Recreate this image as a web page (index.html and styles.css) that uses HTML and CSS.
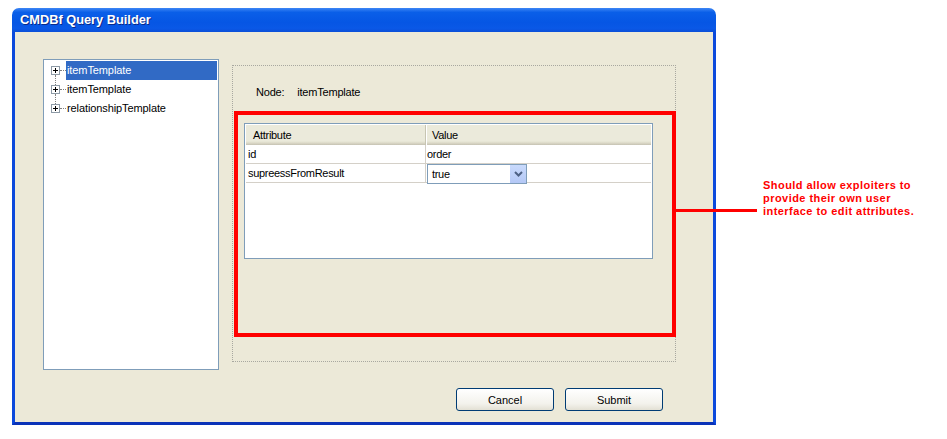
FILE: index.html
```html
<!DOCTYPE html>
<html lang="en">
<head>
    <meta charset="UTF-8">
    <title>CMDBf Query Builder</title>
    <link rel="stylesheet" href="styles.css">
</head>
<body>
    <div class="window">
        <div class="titlebar">CMDBf Query Builder</div>
        <div class="frame">
            <div class="main">
                <div class="tree">
                    <div class="tree-row has-next">
                        <span class="expander"></span><span class="dots"></span>
                        <span class="label selected">itemTemplate</span>
                    </div>
                    <div class="tree-row has-next">
                        <span class="expander"></span><span class="dots"></span>
                        <span class="label">itemTemplate</span>
                    </div>
                    <div class="tree-row">
                        <span class="expander"></span><span class="dots"></span>
                        <span class="label">relationshipTemplate</span>
                    </div>
                </div>

                <div class="panel">
                    <div class="node-row">
                        <span class="node-key">Node:</span>
                        <span>itemTemplate</span>
                    </div>
                    <div class="highlight">
                        <div class="grid">
                            <div class="head first">Attribute</div>
                            <div class="head">Value</div>
                            <div class="cell first">id</div>
                            <div class="cell">order</div>
                            <div class="cell first">supreessFromResult</div>
                            <div class="cell">
                                <div class="combo">
                                    <span>true</span>
                                    <span class="combo-btn">
                                        <svg width="9" height="6" viewBox="0 0 9 6"><path d="M1 1 L4.5 4.5 L8 1" fill="none" stroke="#4d6185" stroke-width="2"/></svg>
                                    </span>
                                </div>
                            </div>
                        </div>
                    </div>
                </div>
            </div>

            <div class="buttons">
                <button class="btn">Cancel</button>
                <button class="btn">Submit</button>
            </div>
        </div>
    </div>

    <div class="note-line"></div>
    <div class="note">Should allow exploiters to<br>provide their own user<br>interface to edit attributes.</div>
</body>
</html>
```

FILE: styles.css
```css
body {
    margin: 0;
    background: #fff;
    font-family: "Liberation Sans", Arial, sans-serif;
    font-size: 11px;
    color: #000;
    position: relative;
    width: 947px;
    height: 439px;
    overflow: hidden;
}
.window {
    margin: 8px 0 0 12px;
    width: 704px;
    height: 417px;
    display: flex;
    flex-direction: column;
}
.titlebar {
    height: 24px;
    border-radius: 7px 7px 0 0;
    background: linear-gradient(#3d86f5 0%, #0a5fe8 18%, #0656e4 60%, #0a58e6 85%, #0b4fd8 100%);
    color: #fff;
    font-weight: bold;
    font-size: 12.8px;
    line-height: 24px;
    padding-left: 8px;
    text-shadow: 1px 1px 0 #0a2a8a;
}
.frame {
    flex: 1;
    background: #ece9d8;
    border: 3px solid #0b49dc;
    border-top: none;
    border-bottom-color: #0a33b8;
    display: flex;
    flex-direction: column;
}
.main {
    display: flex;
    gap: 13px;
    padding: 27px 0 0 28px;
}
.tree {
    width: 176px;
    height: 311px;
    box-sizing: border-box;
    border: 1px solid #7f9db9;
    background: #fff;
    padding-top: 1px;
}
.tree-row {
    position: relative;
    display: flex;
    align-items: center;
    height: 19px;
    padding-left: 7px;
    letter-spacing: -0.1px;
}
.expander {
    position: relative;
    width: 9px;
    height: 9px;
    box-sizing: border-box;
    border: 1px solid #8d9aa6;
    background: #fff;
}
.expander::before {
    content: "";
    position: absolute;
    left: 1px;
    top: 3px;
    width: 5px;
    height: 1px;
    background: #000;
}
.expander::after {
    content: "";
    position: absolute;
    left: 3px;
    top: 1px;
    width: 1px;
    height: 5px;
    background: #000;
}
.has-next .dots::after {
    content: "";
    position: absolute;
    left: 11px;
    top: 14px;
    height: 10px;
    border-left: 1px dotted #808080;
}
.dots {
    width: 6px;
    border-top: 1px dotted #808080;
}
.label {
    flex: 1;
    height: 19px;
    line-height: 19px;
    padding-left: 1px;
    margin-right: 1px;
}
.label.selected {
    background: #316ac5;
    color: #fff;
}
.panel {
    margin-top: 6px;
    width: 444px;
    height: 297px;
    box-sizing: border-box;
    border: 1px dotted #a8a8a0;
}
.node-row {
    padding: 19px 0 0 23px;
    line-height: 14px;
    letter-spacing: -0.2px;
}
.node-key {
    margin-right: 10px;
}
.highlight {
    margin: 12px 0 0 1px;
    width: 442px;
    height: 226px;
    box-sizing: border-box;
    border: 4px solid #ff0000;
    padding: 8px 0 0 6px;
}
.grid {
    width: 409px;
    height: 136px;
    box-sizing: border-box;
    border: 1px solid #7f9db9;
    background: #fff;
    padding: 1px 2px 0 1px;
    display: grid;
    grid-template-columns: 180px 225px;
    grid-auto-rows: 19px;
    grid-template-rows: 20px;
    align-content: start;
    letter-spacing: -0.3px;
}
.head {
    background: linear-gradient(#ebeadb 0%, #ebeadb 80%, #dcd9c8 90%, #c5c2b2 100%);
    line-height: 20px;
    padding-left: 5px;
    border-left: 1px solid #fff;
}
.head.first {
    padding-left: 7px;
    border-left: none;
    border-right: 1px solid #c7c5b2;
}
.cell {
    border-bottom: 1px solid #d4d0c8;
    line-height: 18px;
    padding-left: 1px;
    position: relative;
}
.cell.first {
    border-right: 1px solid #d4d0c8;
    padding-left: 2px;
}
.combo {
    position: absolute;
    left: 1px;
    top: 0;
    width: 100px;
    height: 20px;
    box-sizing: border-box;
    border: 1px solid #7f9db9;
    background: #fff;
    display: flex;
    align-items: center;
    justify-content: space-between;
    padding-left: 4px;
}
.combo-btn {
    width: 16px;
    height: 18px;
    background: linear-gradient(#c9dafc, #b4c8f6);
    display: flex;
    align-items: center;
    justify-content: center;
}
.buttons {
    margin-top: auto;
    display: flex;
    justify-content: flex-end;
    gap: 11px;
    padding: 0 50px 11px 0;
}
.btn {
    width: 98px;
    height: 23px;
    border: 1px solid #003c74;
    border-radius: 3px;
    background: linear-gradient(#ffffff, #f3f2ec 70%, #e3e0d4);
    font-family: "Liberation Sans", Arial, sans-serif;
    font-size: 11px;
    color: #000;
    padding: 0;
}
.note-line {
    position: absolute;
    left: 672px;
    top: 209px;
    width: 85px;
    height: 3px;
    background: #ff0000;
}
.note {
    position: absolute;
    left: 763px;
    top: 179px;
    color: #ff0000;
    font-weight: bold;
    font-size: 11px;
    line-height: 13px;
    letter-spacing: 0.45px;
}
```
